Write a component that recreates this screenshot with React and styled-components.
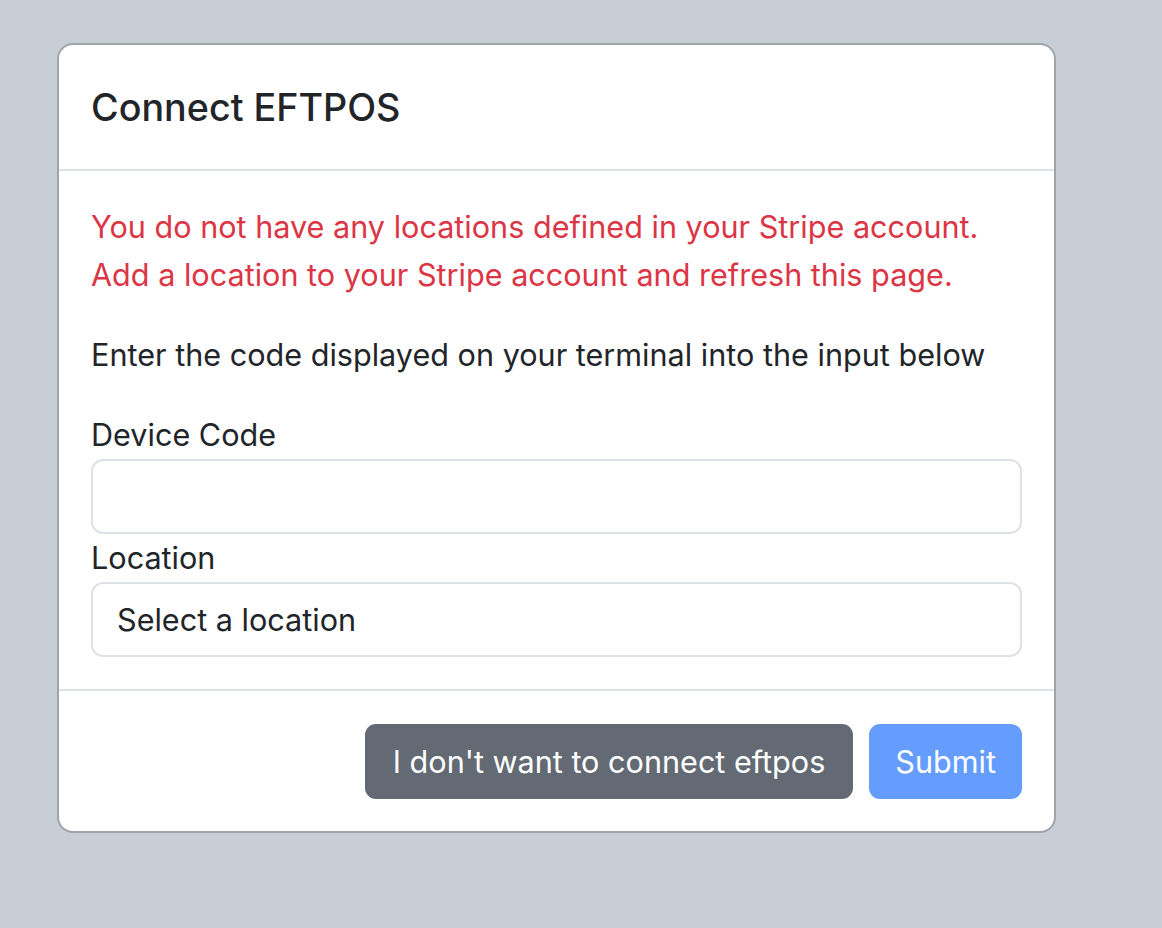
import React from 'react';
import styled, { createGlobalStyle } from 'styled-components';

const GlobalStyle = createGlobalStyle`
  html, body {
    margin: 0;
    padding: 0;
    background: #c7ced6;
    font-family: Inter, "Liberation Sans", Arial, sans-serif;
    color: #212529;
  }
  * { box-sizing: border-box; }
`;

const Page = styled.div`
  width: 1162px;
  height: 928px;
  padding: 43px 0 0 57px;
`;

const Modal = styled.div`
  width: 999px;
  background: #fff;
  background-clip: padding-box;
  border: 2px solid rgba(0, 0, 0, 0.2);
  border-radius: 16px;
  display: flex;
  flex-direction: column;
`;

const Header = styled.div`
  height: 126px;
  padding: 0 32px;
  display: flex;
  align-items: center;
  border-bottom: 2px solid #dee2e6;
`;

const Title = styled.h5`
  margin: 0;
  font-size: 37.7px;
  font-weight: 500;
  line-height: 48px;
  color: #212529;
`;

const Body = styled.div`
  padding: 32px 32px 32px;
`;

const Text = styled.p`
  margin: 0 0 32px;
  font-size: 30.6px;
  line-height: 48px;
  color: ${(p) => (p.danger ? '#dc3545' : '#212529')};
`;

const Label = styled.label`
  display: block;
  font-size: 30.6px;
  line-height: 48px;
`;

const Field = styled.div`
  width: 100%;
  height: 75px;
  border: 2px solid #dee2e6;
  border-radius: 12px;
  padding: 0 24px;
  display: flex;
  align-items: center;
  font-size: 30.6px;
  color: #212529;
  background: #fff;
`;

const Footer = styled.div`
  border-top: 2px solid #dee2e6;
  padding: 33px 32px 32px;
  display: flex;
  justify-content: flex-end;
  gap: 16px;
`;

const Button = styled.button`
  height: 75px;
  padding: 0 ${(p) => (p.primary ? 26 : 28)}px;
  border: none;
  border-radius: 11px;
  font-family: inherit;
  font-size: 30.6px;
  color: #fff;
  background: ${(p) => (p.primary ? '#649dfe' : '#636a73')};
`;

export default function App() {
  return (
    <Page>
      <GlobalStyle />
      <Modal>
        <Header>
          <Title>Connect EFTPOS</Title>
        </Header>
        <Body>
          <Text danger>
            You do not have any locations defined in your Stripe account.
            <br />
            Add a location to your Stripe account and refresh this page.
          </Text>
          <Text>Enter the code displayed on your terminal into the input below</Text>
          <Label>Device Code</Label>
          <Field />
          <Label>Location</Label>
          <Field>Select a location</Field>
        </Body>
        <Footer>
          <Button>I don't want to connect eftpos</Button>
          <Button primary>Submit</Button>
        </Footer>
      </Modal>
    </Page>
  );
}
